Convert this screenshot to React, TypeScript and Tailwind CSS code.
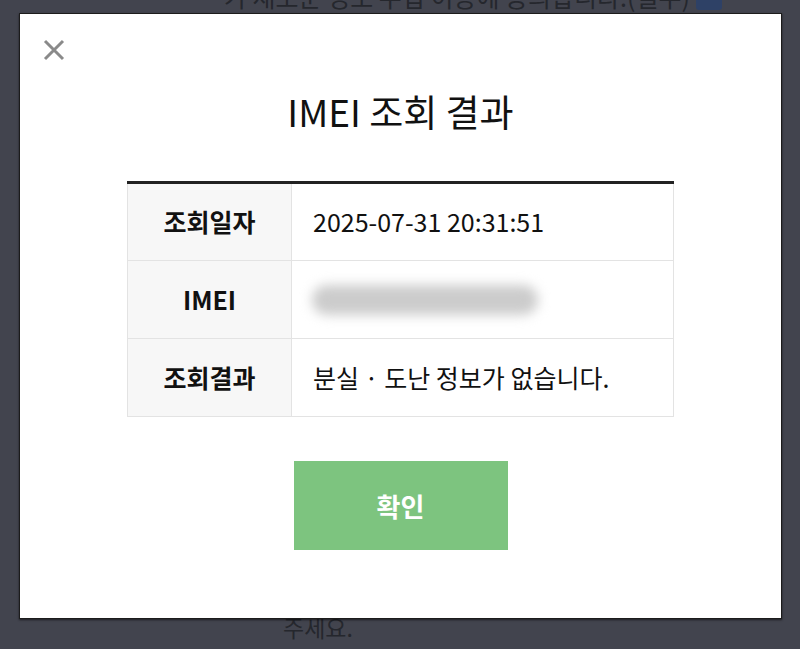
import React from "react";

const font = { fontFamily: '"Noto Sans CJK KR", "Noto Sans", sans-serif' };

export default function App() {
  return (
    <div className="relative w-[800px] h-[649px] overflow-hidden bg-[#42444e]" style={font}>
      {/* page behind overlay */}
      <div className="flex items-end gap-[6px] pl-[224px] -mt-[24px] h-[37px]">
        <span className="text-[25px] leading-[34px] text-[#25272d] whitespace-nowrap">가 새로운 정보 수집 이용에 동의합니다.(필수)</span>
        <span className="w-[26px] h-[26px] rounded-[3px] bg-[#2e4166] mb-[3px] shrink-0" />
      </div>
      <div className="absolute left-[283px] top-[610px] text-[23px] text-[#25272d]">주세요.</div>

      {/* modal */}
      <div className="absolute left-[19px] top-[13px] w-[763px] h-[606px] bg-white border border-[#1c1c1c] shadow-[0_1px_2px_rgba(0,0,0,0.6)] flex flex-col">
        <button className="absolute left-[22px] top-[24px] w-[24px] h-[24px] flex items-center justify-center">
          <svg width="22" height="22" viewBox="0 0 22 22">
            <path d="M2 2 L20 20 M20 2 L2 20" stroke="#8a8a8a" strokeWidth="3" />
          </svg>
        </button>
        <h1 className="mt-[72px] text-center text-[37px] leading-[50px] text-[#111] font-normal">IMEI 조회 결과</h1>
        <div className="mt-[45px] mx-auto w-[547px] border-t-[3px] border-[#222]">
          <div className="grid grid-cols-[164px_1fr] grid-rows-[77px_78px_77px] border-l border-r border-b border-[#e3e3e3]">
            <div className="flex items-center justify-center bg-[#f7f7f7] border-r border-b border-[#e3e3e3] text-[25px] font-bold text-[#111]">조회일자</div>
            <div className="flex items-center pl-[21px] border-b border-[#e3e3e3] text-[25px] text-[#111]">2025-07-31 20:31:51</div>
            <div className="flex items-center justify-center bg-[#f7f7f7] border-r border-b border-[#e3e3e3] text-[25px] font-bold text-[#111]">IMEI</div>
            <div className="flex items-center pl-[20px] border-b border-[#e3e3e3]">
              <div className="w-[226px] h-[30px] rounded-full bg-[#cccccc] blur-[6px]" />
            </div>
            <div className="flex items-center justify-center bg-[#f7f7f7] border-r border-[#e3e3e3] text-[25px] font-bold text-[#111]">조회결과</div>
            <div className="flex items-center pl-[21px] text-[25px] text-[#111]">분실 · 도난 정보가 없습니다.</div>
          </div>
        </div>
        <button className="mt-[44px] mx-auto w-[214px] h-[89px] bg-[#7dc47f] text-white text-[26px] font-bold flex items-center justify-center">확인</button>
      </div>
    </div>
  );
}
